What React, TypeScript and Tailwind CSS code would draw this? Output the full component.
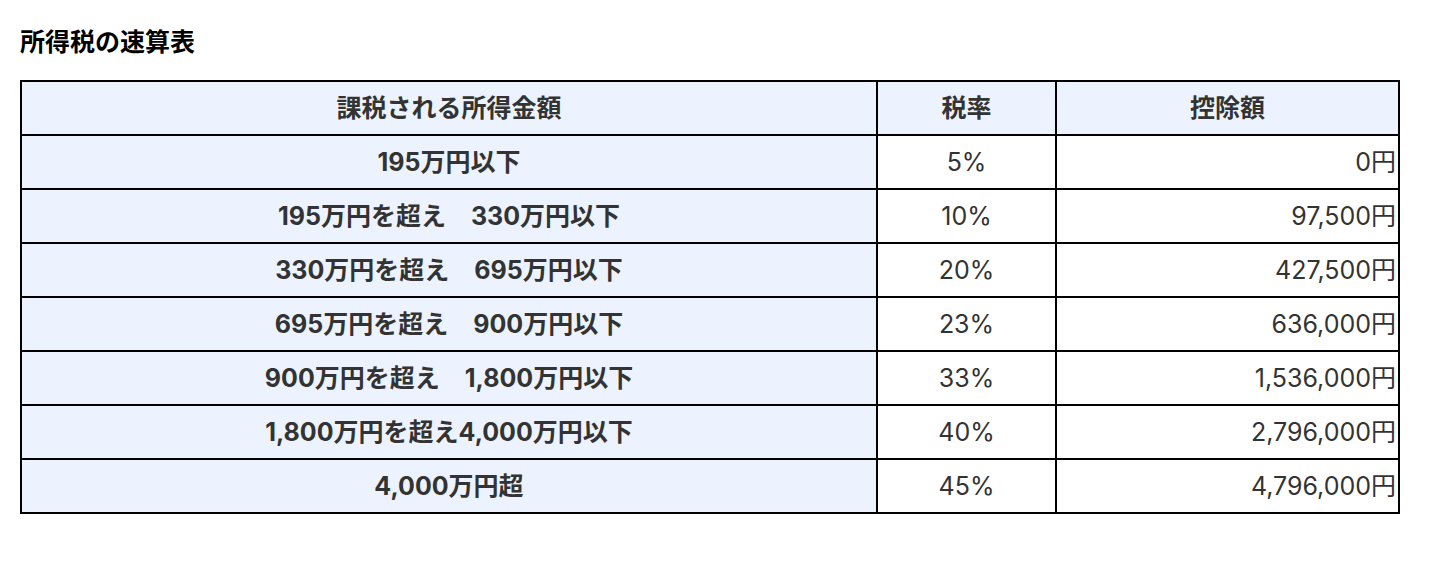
import React from "react";

const rows = [
  ["195万円以下", "5%", "0円"],
  ["195万円を超え　330万円以下", "10%", "97,500円"],
  ["330万円を超え　695万円以下", "20%", "427,500円"],
  ["695万円を超え　900万円以下", "23%", "636,000円"],
  ["900万円を超え　1,800万円以下", "33%", "1,536,000円"],
  ["1,800万円を超え4,000万円以下", "40%", "2,796,000円"],
  ["4,000万円超", "45%", "4,796,000円"],
];

export default function App() {
  return (
    <div
      className="bg-white min-h-[564px] px-[20px] pt-[25px]"
      style={{ fontFamily: 'Inter, "Noto Sans CJK JP", sans-serif' }}
    >
      <h2 className="text-[25px] leading-[34px] font-bold text-black m-0">所得税の速算表</h2>
      <table className="mt-[21px] w-[1378px] table-fixed border-collapse border-2 border-black text-[25px] text-[#333]">
        <colgroup>
          <col className="w-[856px]" />
          <col className="w-[179px]" />
          <col className="w-[343px]" />
        </colgroup>
        <thead>
          <tr className="bg-[#edf3fe] h-[54px]">
            <th className="border-2 border-black font-bold p-0 leading-[32px]">課税される所得金額</th>
            <th className="border-2 border-black font-bold p-0 leading-[32px]">税率</th>
            <th className="border-2 border-black font-bold p-0 leading-[32px]">控除額</th>
          </tr>
        </thead>
        <tbody>
          {rows.map((r, i) => (
            <tr key={i} className="h-[54px]">
              <td className="border-2 border-black bg-[#edf3fe] font-bold text-center p-0 leading-[32px]">{r[0]}</td>
              <td className="border-2 border-black text-center p-0 leading-[32px]">{r[1]}</td>
              <td className="border-2 border-black text-right p-0 pr-[2px] leading-[32px]">{r[2]}</td>
            </tr>
          ))}
        </tbody>
      </table>
    </div>
  );
}
